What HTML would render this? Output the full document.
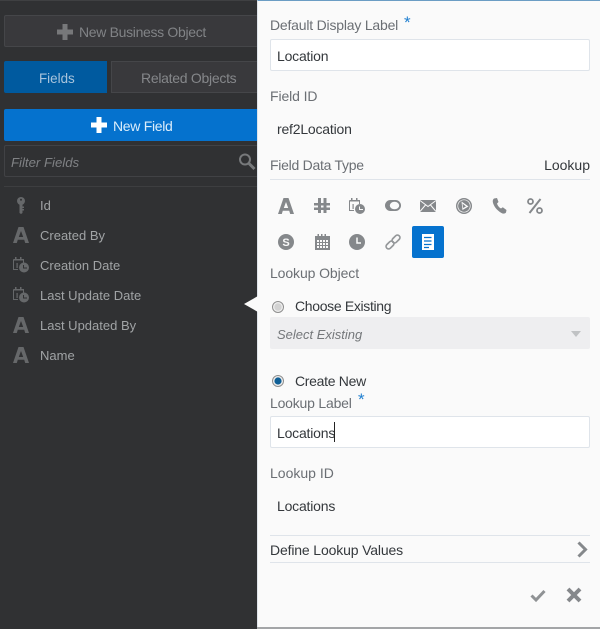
<!DOCTYPE html>
<html><head><meta charset="utf-8"><style>
html,body{margin:0;padding:0}
body{width:600px;height:629px;position:relative;overflow:hidden;background:#303133;font-family:"Liberation Sans",sans-serif;font-size:14px}
.a{position:absolute;white-space:nowrap;line-height:18px}
.b{position:absolute;box-sizing:border-box}
.l{color:#6b6f74;letter-spacing:-.1px}
.d{color:#34383c;letter-spacing:-.2px}
.s{color:#a0a3a5;font-size:13px}
svg{position:absolute;overflow:visible}
.ic{fill:#85888b}
.ds{fill:#66686a}
</style></head><body>
<div class="b" style="left:0;top:0;width:258px;height:1px;background:#3f4042"></div>
<div class="b" style="left:4px;top:15px;width:254px;height:32px;background:#39393c;border:1px solid #454649;border-right:0;border-radius:2px"></div>
<svg style="left:57px;top:24px" width="16" height="16"><path fill="#77787a" d="M5.500 0h5v5.500H16v5h-5.500V16h-5v-5.500H0v-5h5.500z"/></svg>
<div class="a" style="left:79px;top:23px;color:#818386;letter-spacing:-.32px">New Business Object</div>
<div class="b" style="left:4px;top:61px;width:103px;height:32px;background:#005a9f;border-radius:2px 0 0 2px"></div>
<div class="a" style="left:39px;top:70px;color:#a9c4dc;font-size:13.400px">Fields</div>
<div class="b" style="left:111px;top:61px;width:147px;height:32px;background:#39393c;border:1px solid #454649;border-right:0"></div>
<div class="a" style="left:141px;top:69px;color:#85878a;letter-spacing:-.28px">Related Objects</div>
<div class="b" style="left:4px;top:109px;width:254px;height:32px;background:#0572ce;border-radius:2px 0 0 2px"></div>
<svg style="left:91px;top:117px" width="16" height="16"><path fill="#fff" d="M5.500 0h5v5.500H16v5h-5.500V16h-5v-5.500H0v-5h5.500z"/></svg>
<div class="a" style="left:113px;top:117px;color:#dcedfa;letter-spacing:-.3px">New Field</div>
<div class="b" style="left:4px;top:145px;width:254px;height:32px;border:1px solid #414245;border-right:0;border-radius:2px"></div>
<div class="a" style="left:11px;top:154px;color:#808285;font-style:italic;font-size:13.200px">Filter Fields</div>
<svg style="left:238px;top:153px" width="18" height="18"><circle cx="7" cy="6.500" r="5" fill="none" stroke="#77797b" stroke-width="2"/><path d="M11 10.500l5.500 5.500" stroke="#77797b" stroke-width="3"/></svg>
<div class="b" style="left:4px;top:186px;width:254px;height:1px;background:#3d3e40"></div>

<svg style="left:17px;top:197px" width="8" height="17"><path class="ds" fill-rule="evenodd" d="M4 0a4 4 0 0 1 1.500 7.700V9.500H7v1.500H5.500v1H7v1.500H5.500V16L4 17 2.500 16V7.700A4 4 0 0 1 4 0zM4 1.800a1 1 0 1 0 .01 0z"/></svg>
<div class="a s" style="left:40px;top:197px">Id</div>

<svg style="left:13px;top:227px" width="16" height="16"><path class="ds" fill-rule="evenodd" d="M5.500 0h5L16 16h-3.800l-1-3.200H4.800L3.800 16H0zM8 4l-2.200 6h4.400z"/></svg>
<div class="a s" style="left:40px;top:227px">Created By</div>

<svg style="left:13px;top:257px" width="16" height="16"><path d="M.5 2.500h10V6M.5 2.500v10H5" fill="none" stroke="#66686a"/><path class="ds" d="M2 0h1.500v3H2zM7 0h1.500v3H7zM.5 2h10v1.500H.500z"/><circle class="ds" cx="11" cy="10.500" r="5"/><path d="M10.500 8v3H14" stroke="#303133" stroke-width="1" fill="none"/><path d="M3.500 6h1.200v5H3.500z" fill="#66686a"/></svg>
<div class="a s" style="left:40px;top:257px">Creation Date</div>

<svg style="left:13px;top:287px" width="16" height="16"><path d="M.5 2.500h10V6M.5 2.500v10H5" fill="none" stroke="#66686a"/><path class="ds" d="M2 0h1.500v3H2zM7 0h1.500v3H7zM.5 2h10v1.500H.500z"/><circle class="ds" cx="11" cy="10.500" r="5"/><path d="M10.500 8v3H14" stroke="#303133" stroke-width="1" fill="none"/><path d="M3.500 6h1.200v5H3.500z" fill="#66686a"/></svg>
<div class="a s" style="left:40px;top:287px">Last Update Date</div>

<svg style="left:13px;top:317px" width="16" height="16"><path class="ds" fill-rule="evenodd" d="M5.500 0h5L16 16h-3.800l-1-3.200H4.800L3.800 16H0zM8 4l-2.200 6h4.400z"/></svg>
<div class="a s" style="left:40px;top:317px">Last Updated By</div>

<svg style="left:13px;top:347px" width="16" height="16"><path class="ds" fill-rule="evenodd" d="M5.500 0h5L16 16h-3.800l-1-3.200H4.800L3.800 16H0zM8 4l-2.200 6h4.400z"/></svg>
<div class="a s" style="left:40px;top:347px">Name</div>

<div class="b" style="left:257px;top:0;width:343px;height:628px;background:#fafafa;border-left:1px solid #dfe4ea;border-top:1px solid #6b9dc4;border-bottom:1px solid #fff"></div>
<div class="b" style="left:257px;top:627px;width:343px;height:2px;background:#a3a5a7"></div>
<div class="b" style="left:244px;top:296px;width:14px;height:16px;background:#fafafa;clip-path:polygon(100% 0,100% 100%,0 50%)"></div>

<div class="a l" style="left:270px;top:16px;letter-spacing:-.2px">Default Display Label</div>
<div class="a" style="left:404px;top:14px;color:#1f7fd0;font-size:17px">*</div>
<div class="b" style="left:270px;top:39px;width:320px;height:32px;background:#fff;border:1px solid #dfe4ea;border-radius:2px"></div>
<div class="a d" style="left:277px;top:47px">Location</div>
<div class="a l" style="left:270px;top:87px">Field ID</div>
<div class="a d" style="left:277px;top:120px">ref2Location</div>
<div class="a l" style="left:270px;top:156px;letter-spacing:-.27px">Field Data Type</div>
<div class="a d" style="right:10px;top:156px;letter-spacing:0">Lookup</div>
<div class="b" style="left:270px;top:179px;width:320px;height:1px;background:#dfe4ea"></div>

<svg style="left:278px;top:198px" width="16" height="16"><path class="ic" fill-rule="evenodd" d="M5.500 0h5L16 16h-3.800l-1-3.200H4.800L3.800 16H0zM8 4l-2.200 6h4.400z"/></svg>
<svg style="left:314px;top:198px" width="16" height="15"><path class="ic" fill-rule="evenodd" d="M4 0h3v5h2.500V0h3v5H16v2.500h-3.500v2H16V12h-3.500v3h-3v-3H7v3H4v-3H0V9.500h4v-2H0V5h4zM7 7.500v2h2.500v-2z"/></svg>
<svg style="left:349px;top:198px" width="16" height="16"><path d="M.5 2.500h10V6M.5 2.500v10H5" fill="none" stroke="#85888b"/><path class="ic" d="M2 0h1.500v3H2zM7 0h1.500v3H7zM.5 2h10v1.500H.500z"/><circle class="ic" cx="11" cy="11" r="5"/><path d="M10.500 8.500v3H14" stroke="#fafafa" stroke-width="1" fill="none"/><path d="M3.500 6h1.200v5H3.500z" fill="#85888b"/></svg>
<svg style="left:385px;top:200px" width="16" height="12"><rect class="ic" width="16" height="11" rx="5.500"/><ellipse cx="9.500" cy="5.500" rx="4.700" ry="3.800" fill="#fafafa"/></svg>
<svg style="left:420px;top:200px" width="16" height="12"><rect class="ic" width="16" height="12"/><path d="M0 .5l8 6 8-6M0 11.500l5.500-6.500M16 11.500l-5.500-6.500" stroke="#fafafa" fill="none"/></svg>
<svg style="left:456px;top:198px" width="16" height="16"><circle class="ic" cx="8" cy="8" r="8"/><circle cx="8" cy="8" r="6.200" fill="none" stroke="#fafafa" stroke-width=".7"/><path d="M5.500 3.500l7 5-6 3.500z" fill="#fafafa"/><path d="M6.500 5.500l3.500 3-3 1.500z" fill="#85888b"/></svg>
<svg style="left:492px;top:198px" width="15" height="16"><path class="ic" d="M2 .5L5 0l1.500 4L5 5.500c.5 2 2 4 4 5l1.800-1.200L14.500 12l-.5 2.500c-1 1.300-3 1.500-4.500.5C5 12.500 1.500 8 .8 4 .6 2.500 1 1.300 2 .5z"/></svg>
<svg style="left:527px;top:198px" width="16" height="16"><path d="M13.500 1L2.500 15" stroke="#85888b" stroke-width="2"/><circle cx="3.500" cy="3.500" r="2.500" fill="none" stroke="#85888b" stroke-width="1.800"/><circle cx="12.500" cy="12.500" r="2.500" fill="none" stroke="#85888b" stroke-width="1.800"/></svg>

<svg style="left:278px;top:234px" width="16" height="16"><circle class="ic" cx="8" cy="8" r="8"/><text x="8" y="12" font-size="11" font-weight="bold" text-anchor="middle" fill="#fafafa" font-family="Liberation Sans">S</text></svg>
<svg style="left:315px;top:234px" width="15" height="16"><path class="ic" fill-rule="evenodd" d="M2.500 0H4v2h2V0h1.500v2h2V0H11v2h4v14H0V2h2.500zM2 6v2h2V6zm3 0v2h2V6zm3 0v2h2V6zm3 0v2h2V6zM2 9v2h2V9zm3 0v2h2V9zm3 0v2h2V9zm3 0v2h2V9zM2 12v2h2v-2zm3 0v2h2v-2zm3 0v2h2v-2zm3 0v2h2v-2z"/></svg>
<svg style="left:349px;top:234px" width="16" height="16"><circle class="ic" cx="8" cy="8" r="8"/><path d="M8 3.500V9h4" stroke="#fafafa" stroke-width="1.500" fill="none"/></svg>
<svg style="left:385px;top:234px" width="16" height="16"><g fill="none" stroke="#95989a" stroke-width="1.700"><rect x="6.500" y="2.500" width="9" height="5" rx="2.500" transform="rotate(-45 11 5)"/><rect x=".5" y="8.500" width="9" height="5" rx="2.500" transform="rotate(-45 5 11)"/></g></svg>
<div class="b" style="left:412px;top:226px;width:32px;height:32px;background:#0572ce;border-radius:2px"></div>
<svg style="left:422px;top:234px" width="12" height="16"><rect width="12" height="16" fill="#fff"/><path d="M2 3.500h7.500M2 7h7.500M2 10.500h7.500M2 13.500h5" stroke="#0572ce" stroke-width="1.200"/></svg>

<div class="a l" style="left:270px;top:264px">Lookup Object</div>

<svg style="left:272px;top:301px" width="12" height="12"><circle cx="6" cy="6" r="5.500" fill="#efefef" stroke="#8f8f8f"/><circle cx="6" cy="6" r="3.700" fill="#d2d2d2"/></svg>
<div class="a d" style="left:295px;top:297px;letter-spacing:-.33px">Choose Existing</div>
<div class="b" style="left:270px;top:317px;width:320px;height:32px;background:#eeeef0;border-radius:2px"></div>
<div class="a" style="left:277px;top:326px;color:#74777a;font-style:italic;font-size:13px">Select Existing</div>
<div class="b" style="left:571px;top:331px;width:10px;height:6px;background:#c0c2c4;clip-path:polygon(0 0,100% 0,50% 100%)"></div>

<svg style="left:272px;top:375px" width="12" height="12"><circle cx="6" cy="6" r="5.500" fill="#eee" stroke="#8f8f8f"/><circle cx="6" cy="6" r="3.600" fill="#0f5f96"/></svg>
<div class="a d" style="left:295px;top:372px;letter-spacing:-.3px">Create New</div>
<div class="a l" style="left:270px;top:394px;letter-spacing:-.2px">Lookup Label</div>
<div class="a" style="left:358px;top:391px;color:#1f7fd0;font-size:17px">*</div>
<div class="b" style="left:270px;top:416px;width:320px;height:32px;background:#fff;border:1px solid #dfe4ea;border-radius:2px"></div>
<div class="a d" style="left:277px;top:424px">Locations</div>
<div class="b" style="left:334px;top:422px;width:1px;height:20px;background:#222"></div>
<div class="a l" style="left:270px;top:464px;letter-spacing:0">Lookup ID</div>
<div class="a d" style="left:277px;top:497px">Locations</div>
<div class="b" style="left:270px;top:535px;width:320px;height:1px;background:#dfe4ea"></div>
<div class="a d" style="left:270px;top:541px;letter-spacing:-.15px">Define Lookup Values</div>
<svg style="left:577px;top:541px" width="11" height="18"><path d="M1.500 1.500L8.500 8.500L1.500 15.500" fill="none" stroke="#85888b" stroke-width="3"/></svg>
<div class="b" style="left:270px;top:562px;width:320px;height:1px;background:#dfe4ea"></div>
<svg style="left:530px;top:589px" width="16" height="13"><path d="M1.500 6.500L6 11L14.500 2" fill="none" stroke="#8f9294" stroke-width="3"/></svg>
<svg style="left:566px;top:587px" width="16" height="16"><path d="M2 2L14 14M14 2L2 14" fill="none" stroke="#85888b" stroke-width="4"/></svg>
</body></html>
